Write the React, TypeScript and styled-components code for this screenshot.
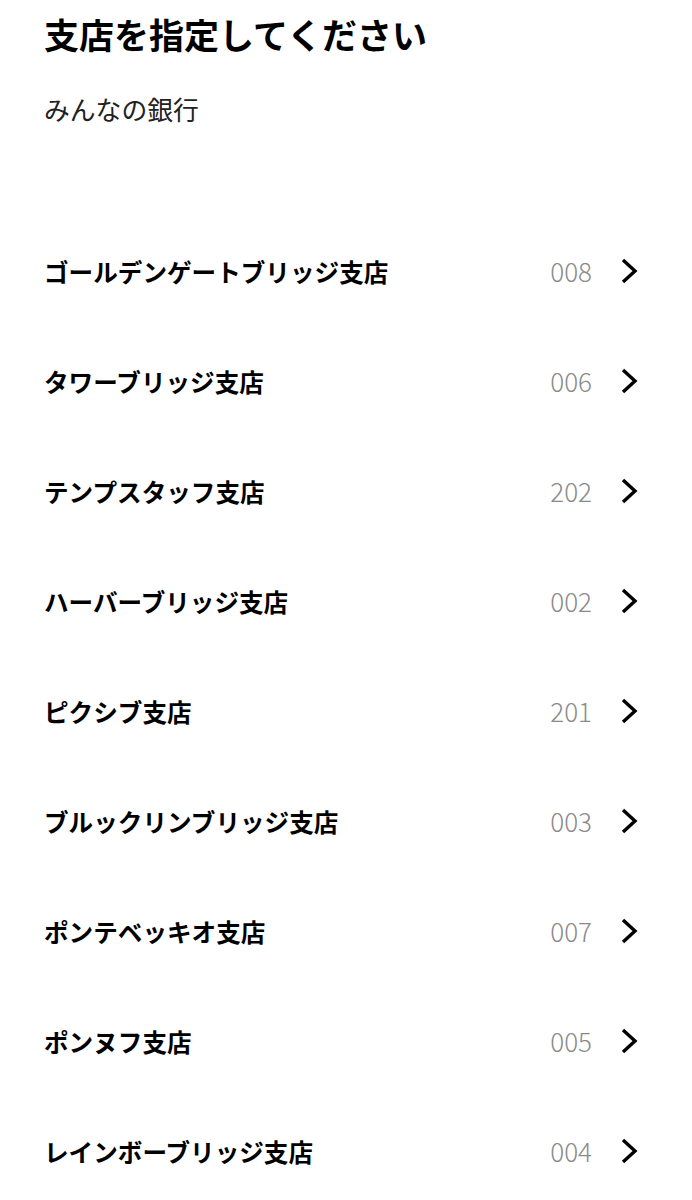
import styled, { createGlobalStyle } from 'styled-components'

const GlobalStyle = createGlobalStyle`
    body {
        margin: 0;
        background: #ffffff;
        font-family: "Noto Sans CJK JP", "Noto Sans", sans-serif;
        color: #000000;
    }
`;

const Page = styled.div`
    padding: 14px 54px 0 44px;
`;

const Title = styled.h1`
    margin: 0;
    font-size: 35px;
    line-height: 40px;
    font-weight: 700;
`;

const BankName = styled.p`
    margin: 37px 0 0;
    font-size: 25.8px;
    line-height: 36px;
    font-weight: 400;
    color: #222222;
`;

const List = styled.ul`
    list-style: none;
    margin: 89px 0 0;
    padding: 0;
`;

const Row = styled.li`
    display: flex;
    align-items: center;
    height: 110px;
    cursor: pointer;
`;

const BranchName = styled.span`
    flex: 1;
    font-size: 24.6px;
    font-weight: 700;
    line-height: 1;
`;

const Code = styled.span`
    margin-right: 28px;
    font-size: 26px;
    font-weight: 300;
    color: #8a8a8a;
    line-height: 1;
`;

const Chevron = () => (
    <svg width="18" height="26" viewBox="0 0 18 26" fill="none">
        <polyline points="3,2 15,13 3,24" stroke="#000" strokeWidth="3.4" strokeLinecap="butt" strokeLinejoin="miter" />
    </svg>
);

const branches = [
    { name: 'ゴールデンゲートブリッジ支店', code: '008' },
    { name: 'タワーブリッジ支店', code: '006' },
    { name: 'テンプスタッフ支店', code: '202' },
    { name: 'ハーバーブリッジ支店', code: '002' },
    { name: 'ピクシブ支店', code: '201' },
    { name: 'ブルックリンブリッジ支店', code: '003' },
    { name: 'ポンテベッキオ支店', code: '007' },
    { name: 'ポンヌフ支店', code: '005' },
    { name: 'レインボーブリッジ支店', code: '004' },
];

export default function App() {
    return (
        <>
            <GlobalStyle />
            <Page>
                <Title>支店を指定してください</Title>
                <BankName>みんなの銀行</BankName>
                <List>
                    {branches.map((b) => (
                        <Row key={b.code}>
                            <BranchName>{b.name}</BranchName>
                            <Code>{b.code}</Code>
                            <Chevron />
                        </Row>
                    ))}
                </List>
            </Page>
        </>
    );
}
